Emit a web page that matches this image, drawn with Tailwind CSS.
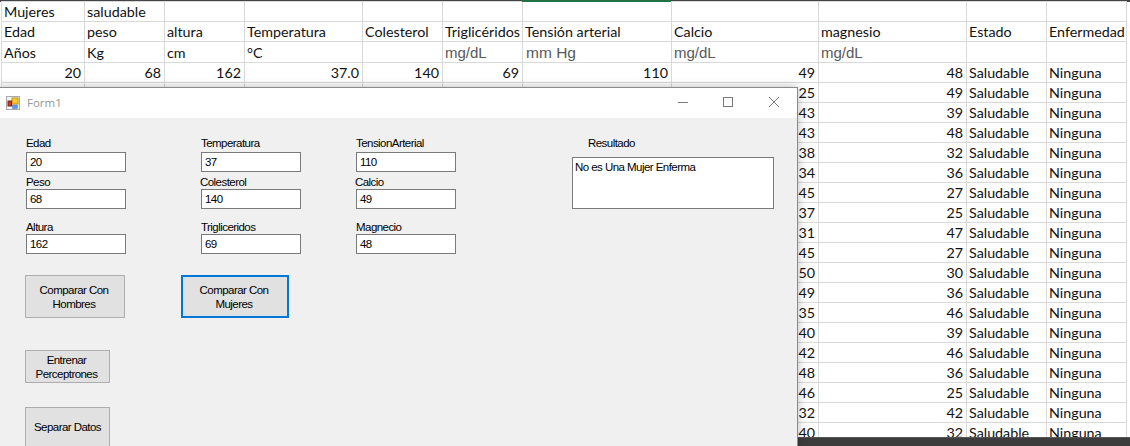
<!DOCTYPE html>
<html lang="en">
<head>
    <meta charset="UTF-8">
    <title>Form1</title>
    <script src="https://cdn.jsdelivr.net/npm/@tailwindcss/browser@4"></script>
</head>
<body class="bg-white">
    <div class="relative h-[446px] w-[1130px] overflow-hidden bg-white">
        <!-- hoja de calculo -->
        <div class="border-t-2 border-[#444] pl-px font-['Lato',sans-serif] text-[14.3px] leading-[19px] text-[#111]">
            <table class="-mt-px w-[1126px] table-fixed border-collapse">
                <colgroup>
                    <col class="w-[83px]"><col class="w-[80px]"><col class="w-[80px]"><col class="w-[118px]"><col class="w-[80px]"><col class="w-[80px]"><col class="w-[149px]"><col class="w-[147px]"><col class="w-[148px]"><col class="w-[80px]"><col class="w-[80px]">
                </colgroup>
                <tbody id="hoja">
                    <tr class="h-[20px]">
                        <td class="border border-[#d9d9d9] px-[2px]">Mujeres</td>
                        <td class="border border-[#d9d9d9] px-[2px]">saludable</td>
                        <td class="border border-[#d9d9d9]"></td><td class="border border-[#d9d9d9]"></td><td class="border border-[#d9d9d9]"></td><td class="border border-[#d9d9d9]"></td><td class="border border-[#d9d9d9]"></td><td class="border border-[#d9d9d9]"></td><td class="border border-[#d9d9d9]"></td><td class="border border-[#d9d9d9]"></td><td class="border border-[#d9d9d9]"></td>
                    </tr>
                    <tr class="h-[20px]">
                        <td class="border border-[#d9d9d9] px-[2px]">Edad</td>
                        <td class="border border-[#d9d9d9] px-[2px]">peso</td>
                        <td class="border border-[#d9d9d9] px-[2px]">altura</td>
                        <td class="border border-[#d9d9d9] px-[2px]">Temperatura</td>
                        <td class="border border-[#d9d9d9] px-[2px]">Colesterol</td>
                        <td class="border border-[#d9d9d9] px-[2px] whitespace-nowrap">Triglicéridos</td>
                        <td class="border border-[#d9d9d9] px-[2px]">Tensión arterial</td>
                        <td class="border border-[#d9d9d9] px-[2px]">Calcio</td>
                        <td class="border border-[#d9d9d9] px-[2px]">magnesio</td>
                        <td class="border border-[#d9d9d9] px-[2px]">Estado</td>
                        <td class="border border-[#d9d9d9] px-[2px]">Enfermedad</td>
                    </tr>
                    <tr class="h-[21px] font-['Liberation_Sans',sans-serif] text-[15px] text-[#595959]">
                        <td class="border border-[#d9d9d9] px-[2px] font-['Lato',sans-serif] text-[14.3px] text-[#111]">Años</td>
                        <td class="border border-[#d9d9d9] px-[2px] font-['Lato',sans-serif] text-[14.3px] text-[#111]">Kg</td>
                        <td class="border border-[#d9d9d9] px-[2px] font-['Lato',sans-serif] text-[14.3px] text-[#111]">cm</td>
                        <td class="border border-[#d9d9d9] px-[2px] font-['Lato',sans-serif] text-[14.3px] text-[#111]">°C</td>
                        <td class="border border-[#d9d9d9]"></td>
                        <td class="border border-[#d9d9d9] px-[2px]">mg/dL</td>
                        <td class="border border-[#d9d9d9] px-[3px] text-[15.5px]">mm Hg</td>
                        <td class="border border-[#d9d9d9] px-[2px]">mg/dL</td>
                        <td class="border border-[#d9d9d9] px-[2px]">mg/dL</td>
                        <td class="border border-[#d9d9d9]"></td>
                        <td class="border border-[#d9d9d9]"></td>
                    </tr>
                </tbody>
            </table>
        </div>
        <!-- columna seleccionada y barra inferior -->
        <div class="absolute top-0 left-[522px] h-[2px] w-[149px] bg-[#217346]"></div>
        <div class="absolute right-0 bottom-0 left-[798px] h-[9px] border-t border-[#555] bg-[#3c3c3c]"></div>

        <!-- ventana Form1 -->
        <div class="absolute top-[87px] left-0 h-[359px] w-[798px] border-t border-r border-[#8a8a8a] bg-[#f0f0f0] font-['Liberation_Sans',sans-serif] text-[11.5px] leading-[14px] tracking-[-0.55px] text-black shadow-[0_0_9px_rgba(0,0,0,0.28)]">
            <div class="flex h-[30px] items-center bg-white pl-[6px]">
                <svg class="h-[14px] w-[14px]" viewBox="0 0 14 14">
                    <rect x="0.5" y="0.5" width="13" height="13" fill="#f4f4f4" stroke="#a8a8a8"/>
                    <rect x="6" y="2" width="6" height="6" fill="#f6c92c" stroke="#c09010"/>
                    <rect x="2" y="5" width="3.5" height="5" fill="#c8352b" stroke="#8c2018"/>
                    <rect x="6.5" y="9" width="5" height="3.5" fill="#5b9be6" stroke="#3f78c0" stroke-width="0.5"/>
                </svg>
                <span class="ml-[7px] font-['Open_Sans',sans-serif] text-[11.5px] tracking-normal text-[#969696]">Form1</span>
                <div class="ml-auto flex items-center">
                    <svg class="h-[30px] w-[45px]" viewBox="0 0 45 30" fill="none" stroke="#7a7a7a"><path d="M16 14.5h10"/></svg>
                    <svg class="h-[30px] w-[45px]" viewBox="0 0 45 30" fill="none" stroke="#7a7a7a"><rect x="16.5" y="9.5" width="9" height="9"/></svg>
                    <svg class="h-[30px] w-[45px]" viewBox="0 0 45 30" fill="none" stroke="#7a7a7a"><path d="M17 9l10 10M27 9l-10 10"/></svg>
                </div>
            </div>
            <div class="flex pt-[18px] pl-[26px]">
                <div class="w-[175px]">
                    <p class="mb-[2px]">Edad</p>
                    <input value="20" class="h-[20px] w-[100px] border border-[#7a7a7a] bg-white px-[3px] outline-none">
                    <p class="mt-[3px]">Peso</p>
                    <input value="68" class="h-[20px] w-[100px] border border-[#7a7a7a] bg-white px-[3px] outline-none">
                    <p class="mt-[11px]">Altura</p>
                    <input value="162" class="h-[20px] w-[100px] border border-[#7a7a7a] bg-white px-[3px] outline-none">
                </div>
                <div class="w-[155px]">
                    <p class="mb-[2px]">Temperatura</p>
                    <input value="37" class="h-[20px] w-[100px] border border-[#7a7a7a] bg-white px-[3px] outline-none">
                    <p class="-ml-px mt-[3px]">Colesterol</p>
                    <input value="140" class="h-[20px] w-[100px] border border-[#7a7a7a] bg-white px-[3px] outline-none">
                    <p class="mt-[11px]">Trigliceridos</p>
                    <input value="69" class="h-[20px] w-[100px] border border-[#7a7a7a] bg-white px-[3px] outline-none">
                </div>
                <div class="w-[216px]">
                    <p class="mb-[2px]">TensionArterial</p>
                    <input value="110" class="h-[20px] w-[100px] border border-[#7a7a7a] bg-white px-[3px] outline-none">
                    <p class="-ml-px mt-[3px]">Calcio</p>
                    <input value="49" class="h-[20px] w-[100px] border border-[#7a7a7a] bg-white px-[3px] outline-none">
                    <p class="mt-[11px]">Magnecio</p>
                    <input value="48" class="h-[20px] w-[100px] border border-[#7a7a7a] bg-white px-[3px] outline-none">
                </div>
                <div>
                    <p class="mb-[7px] ml-[16px]">Resultado</p>
                    <div class="h-[52px] w-[202px] border border-[#7a7a7a] bg-white px-[2px] py-[2px]">No es Una Mujer Enferma</div>
                </div>
            </div>
            <div class="mt-[21px] flex gap-[56px] pl-[25px]">
                <button class="h-[43px] w-[100px] border border-[#adadad] bg-[#e1e1e1] pr-[2px]">Comparar Con<br>Hombres</button>
                <button class="h-[43px] w-[108px] border-2 border-[#0078d7] bg-[#e1e1e1] pr-[2px]">Comparar Con<br>Mujeres</button>
            </div>
            <div class="mt-[32px] flex flex-col items-start gap-[24px] pl-[25px]">
                <button class="h-[33px] w-[85px] border border-[#adadad] bg-[#e1e1e1] pr-[2px]">Entrenar<br>Perceptrones</button>
                <button class="h-[40px] w-[85px] border border-[#adadad] bg-[#e1e1e1]">Separar Datos</button>
            </div>
        </div>
    </div>

    <script>
        // filas de datos: calcio, magnesio (lo demas queda tapado por la ventana)
        const filas = [[49,48],[25,49],[43,39],[43,48],[38,32],[34,36],[45,27],[37,25],[31,47],[45,27],[50,30],[49,36],[35,46],[40,39],[42,46],[48,36],[46,25],[32,42],[40,32]];
        const primera = [20,68,162,"37.0",140,69,110];
        const celda = "border border-[#d9d9d9] px-[3px] text-right";
        const hoja = document.getElementById("hoja");
        filas.forEach((f, i) => {
            const izq = primera.map(v => `<td class="${celda}">${i === 0 ? v : ""}</td>`).join("");
            hoja.insertAdjacentHTML("beforeend", `<tr class="h-[20px]">${izq}<td class="${celda}">${f[0]}</td><td class="${celda}">${f[1]}</td><td class="border border-[#d9d9d9] px-[2px]">Saludable</td><td class="border border-[#d9d9d9] px-[2px]">Ninguna</td></tr>`);
        });
    </script>
</body>
</html>
